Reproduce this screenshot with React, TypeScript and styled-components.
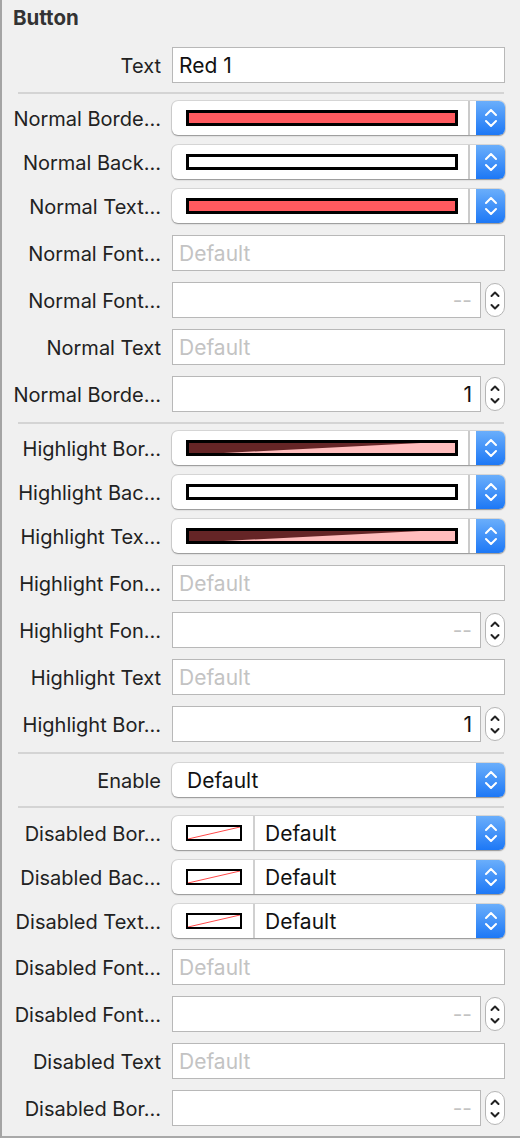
import React from 'react';
import styled, { createGlobalStyle } from 'styled-components';

const GlobalStyle = createGlobalStyle`
  html, body { margin: 0; padding: 0; background: #f0f0f0; }
  body { font-family: Inter, "Noto Sans", "Liberation Sans", sans-serif; }
`;

const Panel = styled.div`
  width: 520px;
  height: 1138px;
  box-sizing: border-box;
  border-left: 2px solid #a4a4a4;
  border-bottom: 2px solid #a9a9a9;
  background: #f0f0f0;
  overflow: hidden;
  display: flex;
  flex-direction: column;
`;

const Title = styled.h2`
  margin: 0;
  padding: 6px 0 0 11px;
  font-size: 20.5px;
  line-height: 24px;
  font-weight: 700;
  color: #333;
`;

const Group = styled.div<{ $gap: number; $top: number }>`
  display: flex;
  flex-direction: column;
  gap: ${(p) => p.$gap}px;
  margin-top: ${(p) => p.$top}px;
`;

const Separator = styled.div<{ $top: number; $bottom: number }>`
  height: 2px;
  background: #d4d4d4;
  margin: ${(p) => p.$top}px 16px ${(p) => p.$bottom}px 16px;
`;

const Row = styled.div<{ $h: number }>`
  display: grid;
  grid-template-columns: 159px 1fr;
  column-gap: 11px;
  align-items: center;
  height: ${(p) => p.$h}px;
  padding-right: 15px;
`;

const Label = styled.div`
  text-align: right;
  font-size: 20px;
  line-height: 24px;
  padding-top: 2px;
  color: #222;
  white-space: nowrap;
  overflow: hidden;
`;

const TextField = styled.div<{ $placeholder?: boolean; $right?: boolean }>`
  height: 100%;
  box-sizing: border-box;
  border: 1px solid #b8b8b8;
  background: #fff;
  display: flex;
  align-items: center;
  justify-content: ${(p) => (p.$right ? 'flex-end' : 'flex-start')};
  padding: 1px 8px 0 6px;
  font-size: 21px;
  color: ${(p) => (p.$placeholder ? '#c3c3c3' : '#111')};
  white-space: nowrap;
`;

const NumberWrap = styled.div`
  height: 100%;
  display: grid;
  grid-template-columns: 1fr 20px;
  column-gap: 4px;
  align-items: center;
`;

const Stepper = styled.div`
  height: 34px;
  box-sizing: border-box;
  border: 1px solid #b5b5b5;
  border-radius: 10px;
  background: #fff;
  display: flex;
  align-items: center;
  justify-content: center;
`;

const Popup = styled.div`
  height: 100%;
  display: flex;
  background: #fff;
  border-radius: 6px;
  box-shadow: 0 0 0 1px rgba(0, 0, 0, 0.1), 0 1px 1.5px rgba(0, 0, 0, 0.32);
  overflow: hidden;
`;

const PopupBody = styled.div<{ $divider?: boolean; $pad: number }>`
  flex: 1;
  display: flex;
  align-items: center;
  min-width: 0;
  padding-left: ${(p) => p.$pad}px;
  padding-right: ${(p) => (p.$divider ? 10 : 0)}px;
  margin-right: ${(p) => (p.$divider ? 6 : 0)}px;
  border-right: ${(p) => (p.$divider ? '2px solid #cacaca' : 'none')};
  font-size: 21px;
  color: #111;
`;

const BlueButton = styled.div`
  width: 29px;
  background: linear-gradient(#6aaefb, #1d78f6);
  display: flex;
  align-items: center;
  justify-content: center;
`;

const Swatch = styled.div<{ $color: string }>`
  flex: 1;
  height: 16px;
  box-sizing: border-box;
  border: 3px solid #000;
  background: ${(p) => p.$color};
  position: relative;
  overflow: hidden;

  svg { position: absolute; inset: 0; width: 100%; height: 100%; display: block; }
`;

const SmallSwatch = styled.div`
  width: 56px;
  height: 16px;
  box-sizing: border-box;
  border: 2px solid #000;
  background: #fff;
  position: relative;
  flex: none;
  margin-right: 11px;

  svg { position: absolute; inset: 0; width: 100%; height: 100%; display: block; }
`;

const PopupText = styled.div`
  height: 100%;
  display: flex;
  align-items: center;
  border-left: 2px solid #d0d0d0;
  padding-left: 10px;
  padding-top: 1px;
  box-sizing: border-box;
  flex: 1;
`;

const BlueChevrons = () => (
  <svg width="12" height="18" viewBox="0 0 12 18" fill="none">
    <polyline points="1,6 6,1 11,6" stroke="#fff" strokeWidth="2" strokeLinecap="round" strokeLinejoin="round" />
    <polyline points="1,12 6,17 11,12" stroke="#fff" strokeWidth="2" strokeLinecap="round" strokeLinejoin="round" />
  </svg>
);

const DarkChevrons = () => (
  <svg width="10" height="19" viewBox="0 0 10 19" fill="none">
    <polyline points="1.5,5 5,1.5 8.5,5" stroke="#222" strokeWidth="2" strokeLinecap="round" strokeLinejoin="round" />
    <polyline points="1.5,14 5,17.5 8.5,14" stroke="#222" strokeWidth="2" strokeLinecap="round" strokeLinejoin="round" />
  </svg>
);

type SwatchKind = 'red' | 'white' | 'split';

const ColorRow = ({ label, kind }: { label: string; kind: SwatchKind }) => (
  <Row $h={34}>
    <Label>{label}</Label>
    <Popup>
      <PopupBody $divider $pad={14}>
        <Swatch $color={kind === 'red' ? '#ff5a5f' : kind === 'white' ? '#fff' : '#ffbdbd'}>
          {kind === 'split' && (
            <svg viewBox="0 0 100 10" preserveAspectRatio="none">
              <polygon points="0,0 87,0 13,10 0,10" fill="#652526" />
            </svg>
          )}
        </Swatch>
      </PopupBody>
      <BlueButton>
        <BlueChevrons />
      </BlueButton>
    </Popup>
  </Row>
);

const DisabledColorRow = ({ label }: { label: string }) => (
  <Row $h={34}>
    <Label>{label}</Label>
    <Popup>
      <PopupBody $pad={14}>
        <SmallSwatch>
          <svg viewBox="0 0 52 12" preserveAspectRatio="none">
            <line x1="0" y1="12" x2="52" y2="0" stroke="#ff4a4a" strokeWidth="1" />
          </svg>
        </SmallSwatch>
        <PopupText>Default</PopupText>
      </PopupBody>
      <BlueButton>
        <BlueChevrons />
      </BlueButton>
    </Popup>
  </Row>
);

const SelectRow = ({ label, value }: { label: string; value: string }) => (
  <Row $h={34}>
    <Label>{label}</Label>
    <Popup>
      <PopupBody $pad={15}>{value}</PopupBody>
      <BlueButton>
        <BlueChevrons />
      </BlueButton>
    </Popup>
  </Row>
);

const FieldRow = ({ label, value, placeholder }: { label: string; value?: string; placeholder?: string }) => (
  <Row $h={36}>
    <Label>{label}</Label>
    <TextField $placeholder={!value}>{value ?? placeholder}</TextField>
  </Row>
);

const NumberRow = ({ label, value }: { label: string; value?: string }) => (
  <Row $h={36}>
    <Label>{label}</Label>
    <NumberWrap>
      <TextField $right $placeholder={!value}>{value ?? '--'}</TextField>
      <Stepper>
        <DarkChevrons />
      </Stepper>
    </NumberWrap>
  </Row>
);

export default function App() {
  return (
    <>
      <GlobalStyle />
      <Panel>
        <Title>Button</Title>
        <Group $gap={0} $top={17}>
          <FieldRow label="Text" value="Red 1" />
        </Group>
        <Separator $top={9} $bottom={7} />
        <Group $gap={10} $top={0}>
          <ColorRow label="Normal Borde…" kind="red" />
          <ColorRow label="Normal Back…" kind="white" />
          <ColorRow label="Normal Text…" kind="red" />
        </Group>
        <Group $gap={11} $top={12}>
          <FieldRow label="Normal Font…" placeholder="Default" />
          <NumberRow label="Normal Font…" />
          <FieldRow label="Normal Text" placeholder="Default" />
          <NumberRow label="Normal Borde…" value="1" />
        </Group>
        <Separator $top={10} $bottom={7} />
        <Group $gap={10} $top={0}>
          <ColorRow label="Highlight Bor…" kind="split" />
          <ColorRow label="Highlight Bac…" kind="white" />
          <ColorRow label="Highlight Tex…" kind="split" />
        </Group>
        <Group $gap={11} $top={12}>
          <FieldRow label="Highlight Fon…" placeholder="Default" />
          <NumberRow label="Highlight Fon…" />
          <FieldRow label="Highlight Text" placeholder="Default" />
          <NumberRow label="Highlight Bor…" value="1" />
        </Group>
        <Separator $top={10} $bottom={9} />
        <SelectRow label="Enable" value="Default" />
        <Separator $top={9} $bottom={8} />
        <Group $gap={10} $top={0}>
          <DisabledColorRow label="Disabled Bor…" />
          <DisabledColorRow label="Disabled Bac…" />
          <DisabledColorRow label="Disabled Text…" />
        </Group>
        <Group $gap={11} $top={11}>
          <FieldRow label="Disabled Font…" placeholder="Default" />
          <NumberRow label="Disabled Font…" />
          <FieldRow label="Disabled Text" placeholder="Default" />
          <NumberRow label="Disabled Bor…" />
        </Group>
      </Panel>
    </>
  );
}
